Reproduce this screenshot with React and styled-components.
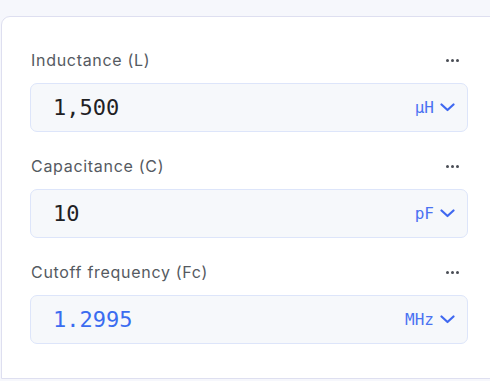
import React from "react";
import styled, { createGlobalStyle } from "styled-components";

const Global = createGlobalStyle`
  html, body { margin: 0; padding: 0; background: #f6f7fc; overflow: hidden; }
  body { width: 490px; height: 381px; }
`;

const Page = styled.div`
  width: 490px;
  height: 381px;
  padding: 16px 0 0 1px;
  box-sizing: border-box;
  overflow: hidden;
`;

const Card = styled.div`
  width: 520px;
  height: 363px;
  box-sizing: border-box;
  background: #ffffff;
  border: 1px solid #dedff0;
  border-radius: 9px 0 0 0;
  padding: 30px 0 0 28px;
  display: flex;
  flex-direction: column;
  gap: 21px;
`;

const Field = styled.div`
  width: 438px;
  display: flex;
  flex-direction: column;
  gap: 10px;
`;

const LabelRow = styled.div`
  display: flex;
  align-items: center;
  justify-content: space-between;
  height: 26px;
`;

const Label = styled.span`
  font-family: "Inter", "Lato", sans-serif;
  font-size: 16px;
  color: #555a61;
  letter-spacing: 0.7px;
  padding-left: 1px;
`;

const Dots = styled.div`
  display: flex;
  gap: 1.8px;
  margin-right: 9px;
`;

const Dot = styled.span`
  width: 3px;
  height: 3px;
  border-radius: 50%;
  background: #4a4d55;
`;

const InputBox = styled.div`
  height: 49px;
  box-sizing: border-box;
  border: 1px solid #dde5fa;
  background: #f6f8fb;
  border-radius: 7px;
  display: flex;
  align-items: center;
  padding: 0 12px 0 22px;
`;

const Value = styled.span`
  flex: 1;
  font-family: "DejaVu Sans Mono", monospace;
  font-size: 22px;
  color: ${(p) => (p.$accent ? "#3b6cf0" : "#1f2124")};
`;

const Unit = styled.span`
  display: flex;
  align-items: center;
  gap: 6px;
  font-family: "DejaVu Sans Mono", monospace;
  font-size: 16px;
  font-weight: 500;
  color: #4a72f2;
`;

const Chevron = () => (
  <svg width="15" height="9" viewBox="0 0 15 9" fill="none">
    <path d="M1.5 1.5 L7.5 7 L13.5 1.5" stroke="#3f68f0" strokeWidth="2.2" strokeLinecap="round" strokeLinejoin="round" />
  </svg>
);

const fields = [
  { label: "Inductance (L)", value: "1,500", unit: "µH" },
  { label: "Capacitance (C)", value: "10", unit: "pF" },
  { label: "Cutoff frequency (Fc)", value: "1.2995", unit: "MHz", accent: true },
];

export default function App() {
  return (
    <>
      <Global />
      <Page>
        <Card>
          {fields.map((f) => (
            <Field key={f.label}>
              <LabelRow>
                <Label>{f.label}</Label>
                <Dots>
                  <Dot />
                  <Dot />
                  <Dot />
                </Dots>
              </LabelRow>
              <InputBox>
                <Value $accent={f.accent}>{f.value}</Value>
                <Unit>
                  {f.unit}
                  <Chevron />
                </Unit>
              </InputBox>
            </Field>
          ))}
        </Card>
      </Page>
    </>
  );
}
